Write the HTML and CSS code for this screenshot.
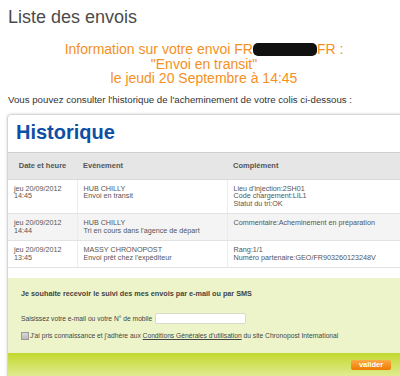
FILE: index.html
```html
<!DOCTYPE html>
<html lang="fr">
<head>
  <meta charset="UTF-8">
  <title>Liste des envois</title>
  <link rel="stylesheet" href="styles.css">
</head>
<body>
  <div class="page">
    <h1 class="page-title">Liste des envois</h1>

    <p class="status">
      Information sur votre envoi FR<span class="redacted"></span>FR :<br>
      "Envoi en transit"<br>
      le jeudi 20 Septembre à 14:45
    </p>

    <p class="intro">Vous pouvez consulter l'historique de l'acheminement de votre colis ci-dessous :</p>

    <div class="card">
      <h2 class="card-title">Historique</h2>

      <table class="history">
        <colgroup>
          <col class="col-date">
          <col class="col-event">
          <col>
        </colgroup>
        <thead>
          <tr>
            <th class="th-date">Date et heure</th>
            <th>Evènement</th>
            <th>Complément</th>
          </tr>
        </thead>
        <tbody>
          <tr>
            <td>jeu 20/09/2012<br>14:45</td>
            <td>HUB CHILLY<br>Envoi en transit</td>
            <td>Lieu d'injection:2SH01<br>Code chargement:LIL1<br>Statut du tri:OK</td>
          </tr>
          <tr class="alt">
            <td>jeu 20/09/2012<br>14:44</td>
            <td>HUB CHILLY<br>Tri en cours dans l'agence de départ</td>
            <td>Commentaire:Acheminement en préparation</td>
          </tr>
          <tr>
            <td>jeu 20/09/2012<br>13:45</td>
            <td>MASSY CHRONOPOST<br>Envoi prêt chez l'expéditeur</td>
            <td>Rang:1/1<br>Numéro partenaire:GEO/FR903260123248V</td>
          </tr>
        </tbody>
      </table>

      <form class="subscribe">
        <p class="subscribe-title">Je souhaite recevoir le suivi des mes envois par e-mail ou par SMS</p>
        <div class="field">
          <label for="contact">Saisissez votre e-mail ou votre N° de mobile</label>
          <input type="text" id="contact" class="field-input">
        </div>
        <div class="agree">
          <span class="checkbox"></span>
          <span>J'ai pris connaissance et j'adhère aux <a href="#" class="terms">Conditions Générales d'utilisation</a> du site Chronopost International</span>
        </div>
      </form>

      <div class="actions">
        <button type="button" class="btn">valider</button>
      </div>
    </div>
  </div>
</body>
</html>
```

FILE: styles.css
```css
/* Chronopost - liste des envois */
body {
  margin: 0;
  overflow: hidden;
  background: #fff;
  font-family: "Liberation Sans", Arial, sans-serif;
}

.page {
  width: 398px;
  margin-left: 7px;
}

.page-title {
  margin: 7px 0 0 1px;
  font-size: 18px;
  line-height: 20px;
  font-weight: normal;
  color: #4b4b4b;
}

.status {
  margin: 15px 0 0;
  padding-right: 4px;
  text-align: center;
  font-size: 14px;
  line-height: 14.5px;
  color: #f5901e;
}

.redacted {
  display: inline-block;
  width: 64px;
  height: 13px;
  background: #111;
  border-radius: 5px;
  vertical-align: -2px;
}

.intro {
  margin: 8px 0 0 1px;
  font-size: 9.7px;
  line-height: 12px;
  color: #333;
}

.card {
  margin-top: 8px;
  border: 1px solid #d6d6d6;
  border-radius: 4px;
  box-shadow: 0 0 3px rgba(0, 0, 0, 0.18);
  overflow: hidden;
}

.card-title {
  margin: 0;
  padding: 5px 8px 8px;
  font-size: 20px;
  line-height: 24px;
  font-weight: bold;
  color: #0e4fa4;
}

.history {
  width: 100%;
  margin-bottom: 10px;
  border-collapse: collapse;
  table-layout: fixed;
  font-size: 7.2px;
  line-height: 7.5px;
  color: #555;
}

.col-date {
  width: 69px;
}

.col-event {
  width: 150px;
}

.history th {
  height: 26px;
  padding: 0 6px;
  background: #e6e6e6;
  border-top: 1px solid #cfcfcf;
  border-bottom: 1px solid #dadada;
  text-align: left;
  font-size: 7.5px;
  font-weight: bold;
  color: #555;
}

.history th.th-date {
  text-align: center;
}

.history td {
  padding: 5px 6px 6px;
  vertical-align: top;
  border-bottom: 1px solid #e2e2e2;
  border-left: 1px solid #ececec;
}

.history td:first-child {
  border-left: none;
}

.history tr.alt td {
  background: #f4f4f4;
}

.subscribe {
  margin: 0;
  padding: 12px 13px 13px;
  background: #eef4c9;
  font-size: 6.7px;
  line-height: 8px;
  color: #444;
}

.subscribe-title {
  margin: 0;
  font-size: 7.25px;
  font-weight: bold;
}

.field {
  display: flex;
  align-items: center;
  gap: 3px;
  margin-top: 15px;
}

.field-input {
  width: 91px;
  height: 11px;
  padding: 0;
  box-sizing: border-box;
  border: 1px solid #d9dcc8;
  border-radius: 2px;
  background: #fff;
}

.agree {
  display: flex;
  align-items: center;
  gap: 1px;
  margin-top: 8px;
}

.checkbox {
  width: 8px;
  height: 8px;
  box-sizing: border-box;
  border: 1px solid #9a9a9a;
  background: linear-gradient(#d8d8d8, #b9b9b9);
}

.terms {
  color: #444;
  text-decoration: underline;
}

.actions {
  display: flex;
  justify-content: flex-end;
  padding: 7px 13px 10px;
  background: linear-gradient(#c2d82b, #e5eea3);
}

.btn {
  width: 40px;
  height: 10px;
  padding: 0;
  border: none;
  border-radius: 2px;
  background: linear-gradient(#fbab45, #ee7a00);
  color: #fff;
  font-family: "Liberation Sans", Arial, sans-serif;
  font-size: 7.5px;
  font-weight: bold;
  line-height: 10px;
}
```
